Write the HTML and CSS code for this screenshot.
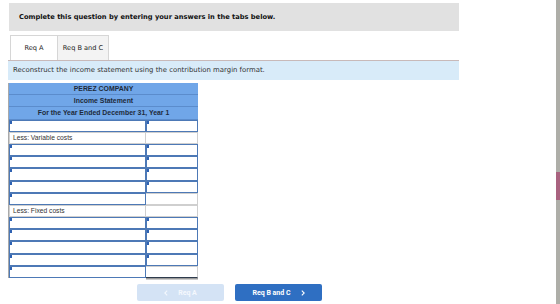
FILE: index.html
```html
<!DOCTYPE html>
<html lang="en">
<head>
    <meta charset="UTF-8">
    <title>Req A</title>
    <link rel="stylesheet" href="styles.css">
</head>
<body>
    <div class="page">
        <div class="question">Complete this question by entering your answers in the tabs below.</div>
        <div class="tabs">
            <div class="tab active">Req A</div>
            <div class="tab">Req B and C</div>
        </div>
        <div class="instructions">Reconstruct the income statement using the contribution margin format.</div>

        <div class="statement">
            <div class="head">PEREZ COMPANY</div>
            <div class="head">Income Statement</div>
            <div class="head">For the Year Ended December 31, Year 1</div>

            <div class="cell input"></div><div class="cell input"></div>
            <div class="cell label">Less: Variable costs</div><div class="cell plain"></div>
            <div class="cell input"></div><div class="cell input"></div>
            <div class="cell input"></div><div class="cell input"></div>
            <div class="cell input"></div><div class="cell input"></div>
            <div class="cell input"></div><div class="cell input"></div>
            <div class="cell input"></div><div class="cell plain"></div>
            <div class="cell label">Less: Fixed costs</div><div class="cell plain"></div>
            <div class="cell input"></div><div class="cell input"></div>
            <div class="cell input"></div><div class="cell input"></div>
            <div class="cell input"></div><div class="cell input"></div>
            <div class="cell input"></div><div class="cell input"></div>
            <div class="cell input"></div><div class="cell plain last"></div>
        </div>

        <div class="nav-buttons">
            <button class="btn prev" disabled>
                <svg class="chev" viewBox="0 0 6 10" width="4" height="6"><path d="M5 1 L1 5 L5 9" fill="none" stroke="currentColor" stroke-width="1.8"/></svg>
                <span>Req A</span>
            </button>
            <button class="btn next">
                <span>Req B and C</span>
                <svg class="chev" viewBox="0 0 6 10" width="4" height="6"><path d="M1 1 L5 5 L1 9" fill="none" stroke="currentColor" stroke-width="1.8"/></svg>
            </button>
        </div>
    </div>
    <div class="side-strip">
        <div class="strip-pic"></div>
    </div>
</body>
</html>
```

FILE: styles.css
```css
body {
    margin: 0;
    padding: 0;
    background: #ffffff;
    font-family: "DejaVu Sans", Verdana, sans-serif;
    color: #222;
    width: 560px;
    height: 304px;
    overflow: hidden;
    position: relative;
}

.page {
    width: 451px;
    padding: 3px 0 0 8px;
}

.question {
    background-color: #e1e1e1;
    height: 28px;
    line-height: 28px;
    padding-left: 10px;
    margin-left: 1px;
    font-size: 6.7px;
    font-weight: bold;
    color: #111;
}

.tabs {
    display: flex;
    margin-top: 4px;
    padding-left: 2px;
}

.tab {
    width: 48px;
    height: 25px;
    line-height: 25px;
    text-align: center;
    font-size: 6.6px;
    color: #222;
    background-color: #f3f3f3;
    border: 1px solid #d6d6d6;
    border-bottom: none;
    box-sizing: border-box;
}

.tab + .tab {
    width: 51px;
    border-left: none;
}

.tab.active {
    background-color: #ffffff;
}

.instructions {
    background-color: #d8ebf9;
    border-top: 1px solid #c8b9b9;
    height: 19px;
    line-height: 19px;
    padding-left: 5px;
    font-size: 6.9px;
    color: #333;
}

.statement {
    display: grid;
    grid-template-columns: 137px 52px;
    grid-auto-rows: 12.2px;
    width: 189px;
    margin-top: 3px;
    border-left: 1px solid #a9a9a9;
    border-right: 1px solid #a9a9a9;
    box-sizing: border-box;
    font-family: "Liberation Sans", Arial, sans-serif;
}

.head {
    grid-column: 1 / 3;
    background-color: #70a6e8;
    border-bottom: 1px solid #5b8ccc;
    text-align: center;
    font-weight: bold;
    font-size: 6.9px;
    line-height: 11.2px;
    color: #1d2a3a;
}

.cell {
    box-sizing: border-box;
    background: #fff;
    position: relative;
}

.cell.input {
    border: 1.5px solid #4d79b6;
}

.cell.input::before {
    content: "";
    position: absolute;
    left: 0;
    top: 0;
    width: 2px;
    height: 3px;
    background-color: #2f62b2;
}

.cell.label {
    border: 1px solid #cfcfcf;
    font-size: 6.7px;
    line-height: 10px;
    padding-left: 3px;
    color: #333;
}

.cell.plain {
    border: 1px solid #cfcfcf;
    border-left: none;
}

.cell.plain.last {
    border-bottom: 1.5px solid #2e3b4d;
    box-shadow: 0 1.5px 0 #9a9a9a;
}

.nav-buttons {
    display: flex;
    gap: 11px;
    margin: 6px 0 0 129px;
}

.btn {
    width: 87px;
    height: 17px;
    border: none;
    border-radius: 2px;
    font-family: Roboto, "Liberation Sans", sans-serif;
    font-weight: bold;
    font-size: 7px;
    color: #fff;
    padding: 0;
    display: flex;
    align-items: center;
    justify-content: center;
    gap: 10px;
}

.btn .chev {
    display: block;
}

.btn.prev {
    background-color: #d4e3f5;
    color: #f4f8fd;
}

.btn.next {
    background-color: #2f6fc2;
}

.side-strip {
    position: absolute;
    right: 0;
    top: 0;
    width: 4px;
    height: 304px;
    background-color: #aeaea8;
}

.strip-pic {
    margin-top: 172px;
    height: 28px;
    background-color: #a9637f;
}
```
